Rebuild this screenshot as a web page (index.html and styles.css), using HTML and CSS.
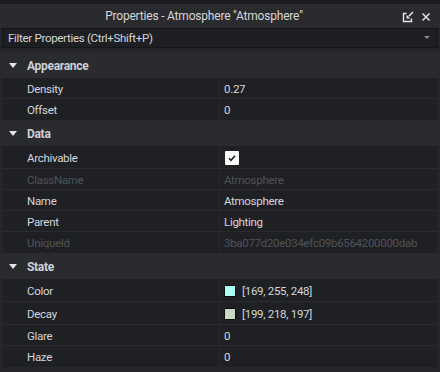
FILE: index.html
```html
<!DOCTYPE html>
<html>
<head>
<meta charset="utf-8">
<link rel="stylesheet" href="styles.css">
</head>
<body>
<div class="window">
  <div class="titlebar">
    <div class="title">Properties - Atmosphere "Atmosphere"</div>
    <div class="tools">
      <svg class="undock" width="12" height="12" viewBox="0 0 12 12">
        <path d="M4.5 2.5 H1.5 V10.5 H9.5 V7.5" fill="none" stroke="#e6e6e6" stroke-width="1.4"/>
        <path d="M11 1 L6.8 5.2" stroke="#e6e6e6" stroke-width="1.6"/>
        <polygon points="4.5,3.8 4.5,7.5 8.2,7.5" fill="#e6e6e6"/>
      </svg>
      <svg class="close" width="10" height="10" viewBox="0 0 10 10">
        <path d="M1.5 1.5 L8.5 8.5 M8.5 1.5 L1.5 8.5" stroke="#e0e0e0" stroke-width="1.5"/>
      </svg>
    </div>
  </div>
  <div class="filter">
    <span class="filter-text">Filter Properties (Ctrl+Shift+P)</span>
    <svg class="drop" width="6" height="4" viewBox="0 0 6 4"><polygon points="0,0 6,0 3,3" fill="#8a8b90"/></svg>
  </div>
  <div class="list">
    <div class="section">
      <svg class="arrow" width="8" height="5" viewBox="0 0 8 5"><polygon points="0,0 8,0 4,5" fill="#e4e4e4"/></svg>
      <span>Appearance</span>
    </div>
    <div class="prop"><div class="name">Density</div><div class="value">0.27</div></div>
    <div class="prop last"><div class="name">Offset</div><div class="value">0</div></div>

    <div class="section">
      <svg class="arrow" width="8" height="5" viewBox="0 0 8 5"><polygon points="0,0 8,0 4,5" fill="#e4e4e4"/></svg>
      <span>Data</span>
    </div>
    <div class="prop tall"><div class="name">Archivable</div><div class="value">
      <span class="check"><svg width="14" height="14" viewBox="0 0 14 14"><path d="M4 7.3 L6 9.3 L10 4.8" fill="none" stroke="#1b1b1b" stroke-width="1.5"/></svg></span>
    </div></div>
    <div class="prop dis"><div class="name">ClassName</div><div class="value">Atmosphere</div></div>
    <div class="prop"><div class="name">Name</div><div class="value">Atmosphere</div></div>
    <div class="prop"><div class="name">Parent</div><div class="value">Lighting</div></div>
    <div class="prop dis last"><div class="name">UniqueId</div><div class="value">3ba077d20e034efc09b6564200000dab</div></div>

    <div class="section">
      <svg class="arrow" width="8" height="5" viewBox="0 0 8 5"><polygon points="0,0 8,0 4,5" fill="#e4e4e4"/></svg>
      <span>State</span>
    </div>
    <div class="prop tall"><div class="name">Color</div><div class="value"><span class="swatch swatch-a"></span>[169, 255, 248]</div></div>
    <div class="prop tall"><div class="name">Decay</div><div class="value"><span class="swatch swatch-b"></span>[199, 218, 197]</div></div>
    <div class="prop"><div class="name">Glare</div><div class="value">0</div></div>
    <div class="prop last"><div class="name">Haze</div><div class="value">0</div></div>
  </div>
</div>
</body>
</html>
```

FILE: styles.css
```css
* { box-sizing: border-box; }
html, body { margin: 0; padding: 0; }
body {
  width: 440px;
  height: 372px;
  overflow: hidden;
  background: #1b1c1f;
  font-family: Roboto, "Liberation Sans", sans-serif;
  font-size: 11.5px;
  letter-spacing: -0.3px;
  color: #d3d6dc;
}
.window {
  margin-top: 4px;
  height: 368px;
  background: #25262a;
  display: flex;
  flex-direction: column;
}
.titlebar {
  height: 24px;
  background: #2a2b2f;
  display: flex;
  align-items: center;
}
.title {
  width: 402px;
  padding-left: 6px;
  text-align: center;
  color: #d6d6d6;
  font-size: 12px;
  letter-spacing: -0.2px;
}
.tools {
  display: flex;
  align-items: center;
  gap: 7px;
  padding-top: 1px;
}
.undock { display: block; }
.close { display: block; }
.filter {
  height: 20px;
  margin: 0 2px;
  background: #1e1f22;
  border: 1px solid #151618;
  display: flex;
  align-items: center;
  justify-content: space-between;
  padding: 0 7px 0 5px;
}
.filter-text { color: #d3d6dc; }
.drop { display: block; }
.list {
  padding-top: 4px;
  display: flex;
  flex-direction: column;
}
.section {
  height: 26px;
  background: #2a2b2f;
  display: flex;
  align-items: center;
  padding-left: 9px;
  padding-top: 1px;
  font-size: 12px;
  letter-spacing: -0.3px;
  font-weight: bold;
  color: #cdd0d8;
}
.section .arrow { display: block; margin-right: 10px; }
.prop {
  margin: 0 3px;
  height: 21px;
  background: #1f2023;
  border-bottom: 1px solid #2a2b2f;
  display: grid;
  grid-template-columns: 217px 1fr;
}
.prop.last { border-bottom: none; }
.prop.tall { height: 23px; }
.name {
  padding-left: 24px;
  padding-top: 1px;
  border-right: 1px solid #2a2b2f;
  display: flex;
  align-items: center;
}
.value {
  padding-left: 4px;
  padding-top: 1px;
  display: flex;
  align-items: center;
}
.dis .name, .dis .value { color: #50535a; }
.check {
  width: 14px;
  height: 14px;
  background: #fafafa;
  border-radius: 1px;
  margin-left: 1px;
  display: block;
}
.check svg { display: block; }
.swatch {
  width: 12px;
  height: 12px;
  border: 1px solid #0c0c0c;
  margin-right: 6px;
  display: block;
}
.swatch-a { background: rgb(169, 255, 248); }
.swatch-b { background: rgb(199, 218, 197); }
```
